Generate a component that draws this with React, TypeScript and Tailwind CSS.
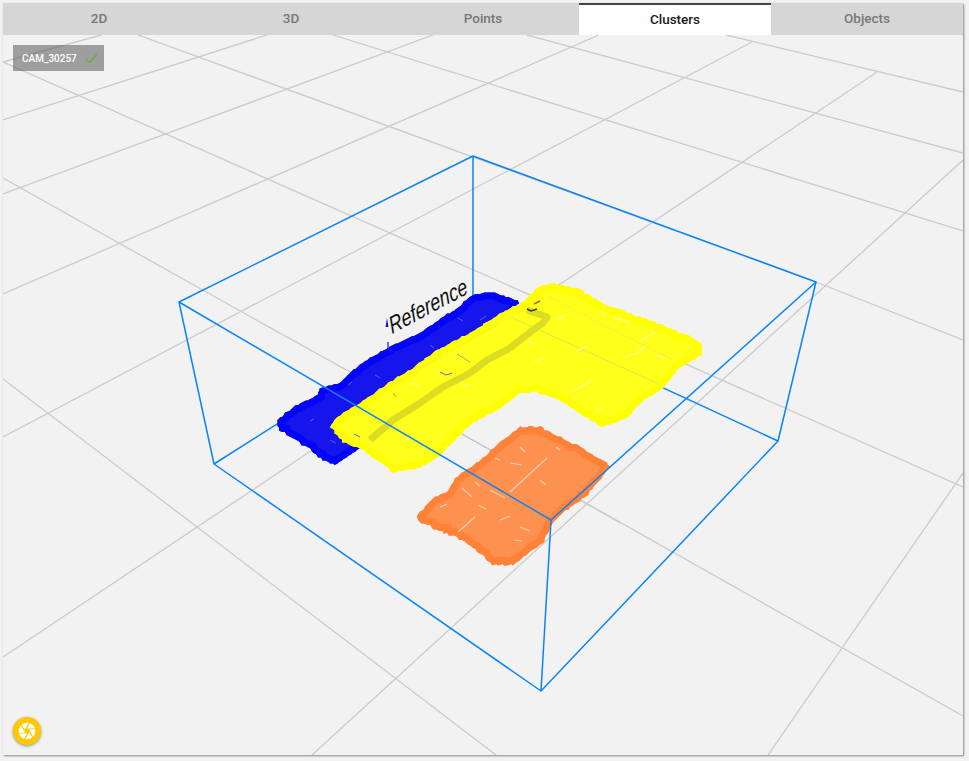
import { MdCamera } from 'react-icons/md';

type Pt = [number, number];

const tabs = ['2D', '3D', 'Points', 'Clusters', 'Objects'];

const grid: Pt[][] = [
  [[3, 62], [101, 35]],
  [[3, 120], [267, 35]],
  [[3, 194], [433, 35]],
  [[3, 294], [599, 35]],
  [[3, 437], [752, 42]],
  [[3, 657], [877, 72]],
  [[312, 755], [963, 160]],
  [[768, 755], [963, 473]],
  [[726, 35], [963, 92]],
  [[527, 35], [963, 153]],
  [[333, 35], [963, 231]],
  [[138, 35], [816, 282], [963, 340]],
  [[3, 62], [485, 275], [963, 487]],
  [[3, 178], [242, 312], [586, 503], [963, 716]],
  [[3, 379], [197, 527], [496, 755]],
];

const blueShape: Pt[] = [
  [277, 420], [293, 407], [318, 395], [320, 388], [340, 383], [353, 370], [370, 358], [393, 345], [420, 333],
  [457, 308], [473, 295], [492, 292], [520, 302], [500, 340], [400, 420], [358, 450], [335, 465], [328, 463],
  [307, 448], [280, 430],
];

const yellowShape: Pt[] = [
  [330, 427], [337, 417], [357, 405], [375, 393], [393, 380], [410, 370], [437, 350], [470, 333], [503, 312],
  [523, 302], [537, 288], [552, 283], [580, 290], [600, 302], [620, 310], [653, 322], [687, 335], [703, 345],
  [702, 355], [680, 367], [663, 388], [640, 403], [627, 418], [602, 427], [583, 415], [560, 400], [537, 392],
  [520, 393], [500, 408], [470, 425], [437, 458], [420, 468], [393, 472], [373, 457], [357, 447], [343, 442],
];

const orangeShape: Pt[] = [
  [418, 515], [433, 498], [447, 492], [455, 478], [477, 463], [497, 445], [520, 427], [540, 427], [560, 437],
  [583, 448], [605, 462], [610, 467], [587, 495], [563, 513], [553, 523], [543, 543], [530, 552], [513, 565],
  [493, 565], [480, 553], [457, 537], [437, 530], [418, 520],
];

const yellowStreaks: Pt[][] = [
  [[640, 341], [656, 332]], [[528, 341], [533, 344]], [[576, 351], [587, 346]], [[600, 311], [606, 314]],
  [[625, 357], [638, 353], [645, 346]], [[655, 355], [665, 358]], [[572, 392], [592, 380]], [[598, 410], [602, 407]],
  [[535, 362], [543, 358]], [[412, 383], [418, 386]], [[405, 440], [412, 436]], [[460, 383], [468, 386]],
  [[615, 318], [630, 322]], [[556, 320], [566, 315]],
];

const orangeStreaks: Pt[][] = [
  [[547, 458], [510, 492]], [[475, 517], [458, 532]], [[495, 458], [500, 460]], [[520, 447], [525, 452]],
  [[556, 447], [560, 450]], [[462, 488], [472, 497]], [[478, 505], [486, 509]], [[500, 520], [510, 516]],
  [[520, 527], [530, 531]], [[440, 507], [447, 504]], [[490, 490], [505, 498]], [[515, 540], [522, 541]],
  [[540, 480], [546, 485]], [[510, 463], [522, 465]], [[475, 482], [480, 486]],
];

const blueSpecks: Pt[][] = [
  [[480, 320], [486, 316]], [[458, 318], [463, 321]], [[310, 421], [314, 419]], [[330, 440], [336, 443]],
  [[430, 345], [434, 348]], [[375, 375], [380, 378]], [[348, 385], [352, 382]],
];

// point cloud outlines are rough, so break up every edge into small steps
function jag(points: Pt[], seed: number) {
  let s = seed;
  const out: string[] = [];
  points.forEach((p, i) => {
    const q = points[(i + 1) % points.length];
    const steps = Math.max(1, Math.ceil(Math.hypot(q[0] - p[0], q[1] - p[1]) / 3));
    for (let k = 0; k < steps; k++) {
      s = (s * 9301 + 49297) % 233280;
      const n = s / 233280 - 0.5;
      const x = p[0] + ((q[0] - p[0]) * k) / steps + n * 1.5;
      const y = p[1] + ((q[1] - p[1]) * k) / steps - n * 1.5;
      out.push(`${Math.round(x / 1.5) * 1.5},${Math.round(y / 1.5) * 1.5}`);
    }
  });
  return out.join(' ');
}

const line = (pts: Pt[]) => pts.map(p => p.join(',')).join(' ');

function Cloud({ id, shape, seed, fill, edge, edgeWidth }: { id: string; shape: Pt[]; seed: number; fill: string; edge: string; edgeWidth: number }) {
  const pts = jag(shape, seed);
  return (
    <>
      <clipPath id={id}><polygon points={pts} /></clipPath>
      <polygon points={pts} fill={fill} />
      <polygon points={pts} fill="none" stroke={edge} strokeWidth={edgeWidth} clipPath={`url(#${id})`} />
    </>
  );
}

function Scene() {
  return (
    <svg className="absolute inset-0" width={960} height={720} viewBox="3 35 960 720">
      {grid.map((g, i) => (
        <polyline key={i} points={line(g)} fill="none" stroke="#cbcbcb" strokeWidth={1.3} />
      ))}

      {/* back edges of the box */}
      <g stroke="#0a84f7" strokeWidth={1.5} fill="none">
        <polyline points="473,156 473,300" />
        <polyline points="214,464 473,300 778,441" />
      </g>

      <Cloud id="blue" shape={blueShape} seed={11} fill="#1616ec" edge="#0404f8" edgeWidth={14} />
      {blueSpecks.map((g, i) => (
        <polyline key={i} points={line(g)} stroke="#5c5cf0" strokeWidth={1} fill="none" />
      ))}
      <Cloud id="yellow" shape={yellowShape} seed={29} fill="#ffff1c" edge="#ffff00" edgeWidth={14} />
      <polyline points="527,310 547,317 543,323 533,330 510,348 487,360 470,373 443,387 420,403 393,420 370,440" fill="none" stroke="#dcdc22" strokeWidth={7} strokeLinejoin="round" />
      <polyline points="510,317 657,383" stroke="#dcdc50" strokeWidth={0.8} fill="none" />
      <polyline points="545,295 673,360" stroke="#eeee40" strokeWidth={0.8} fill="none" />
      <polyline points="370,398 510,317" stroke="#eeee40" strokeWidth={0.8} fill="none" />
      {yellowStreaks.map((g, i) => (
        <polyline key={i} points={line(g)} stroke="#ffff9a" strokeWidth={1.3} fill="none" />
      ))}
      <polyline points="527,309 531,311 537,309" stroke="#3a3a20" strokeWidth={1.5} fill="none" />
      <polyline points="534,304 540,301" stroke="#b5602a" strokeWidth={1.5} fill="none" />
      <polyline points="440,372 446,375 452,373" stroke="#6a6ad0" strokeWidth={1} fill="none" />
      <polyline points="457,354 470,362" stroke="#7a9a80" strokeWidth={0.8} fill="none" />
      <polyline points="393,393 396,397" stroke="#e08a20" strokeWidth={1} fill="none" />
      <polyline points="354,434 360,437" stroke="#6a6ad0" strokeWidth={1} fill="none" />

      <Cloud id="orange" shape={orangeShape} seed={47} fill="#ff9150" edge="#ff8238" edgeWidth={14} />
      <polyline points="463,435 620,523" stroke="#c8a080" strokeWidth={1} opacity={0.3} fill="none" />
      {orangeStreaks.map((g, i) => (
        <polyline key={i} points={line(g)} stroke="#ffd0ac" strokeWidth={1.2} fill="none" />
      ))}

      {/* front edges of the box */}
      <g stroke="#0a84f7" strokeWidth={1.5} fill="none" strokeLinejoin="round">
        <polygon points="179,302 473,156 816,282 551,520" />
        <polyline points="179,302 214,464 541,691 551,520" />
        <polyline points="816,282 778,441 541,691" />
      </g>

      <polygon points="387,318 385.5,327 388.5,327" fill="#1414d8" />
      <polyline points="388,342 388,350" stroke="#1414d8" strokeWidth={1.2} />
      <text
        transform="translate(392 334) rotate(-28) skewX(-10) scale(0.86 1.05)"
        fontFamily="'Liberation Sans', sans-serif"
        fontStyle="italic"
        fontSize={22}
        fill="#111111"
      >
        Reference
      </text>
    </svg>
  );
}

export default function App() {
  return (
    <div className="w-[969px] h-[761px] pt-[3px] pl-[3px] bg-[#f2f2f2] overflow-hidden font-['Roboto',sans-serif]">
      <div className="w-[960px] h-[752px] flex flex-col shadow-[1px_1px_2px_rgba(0,0,0,0.45)]">
        <div className="flex h-8 bg-[#d6d6d6]">
          {tabs.map(t => (
            <div
              key={t}
              className={`flex-1 flex items-center justify-center pb-px text-[13.5px] font-medium ${t === 'Clusters' ? 'bg-white text-[#1a1a1a] border-t-2 border-[#444444] pb-[3px]' : 'text-[#777777]'}`}
            >
              {t}
            </div>
          ))}
        </div>
        <div className="relative flex-1 bg-[#f2f2f2] overflow-hidden">
          <Scene />
          <div className="absolute left-[10px] top-[10px] w-[91px] h-[26px] pl-[9px] flex items-center gap-2 bg-[rgba(90,90,90,0.55)] text-white text-[10px] font-medium">
            <span>CAM_30257</span>
            <svg width="14" height="12" viewBox="0 0 14 12" fill="none" stroke="#5cb531" strokeWidth="1.2">
              <polyline points="0.5,6.5 4.5,10.5 12.5,1.5" />
            </svg>
          </div>
          <div className="absolute left-[10px] bottom-[10px] w-7 h-7 rounded-full bg-[#ffc800] flex items-center justify-center shadow-[0_1px_3px_rgba(0,0,0,0.4)]">
            <MdCamera className="text-white" size={20} />
          </div>
        </div>
      </div>
    </div>
  );
}
